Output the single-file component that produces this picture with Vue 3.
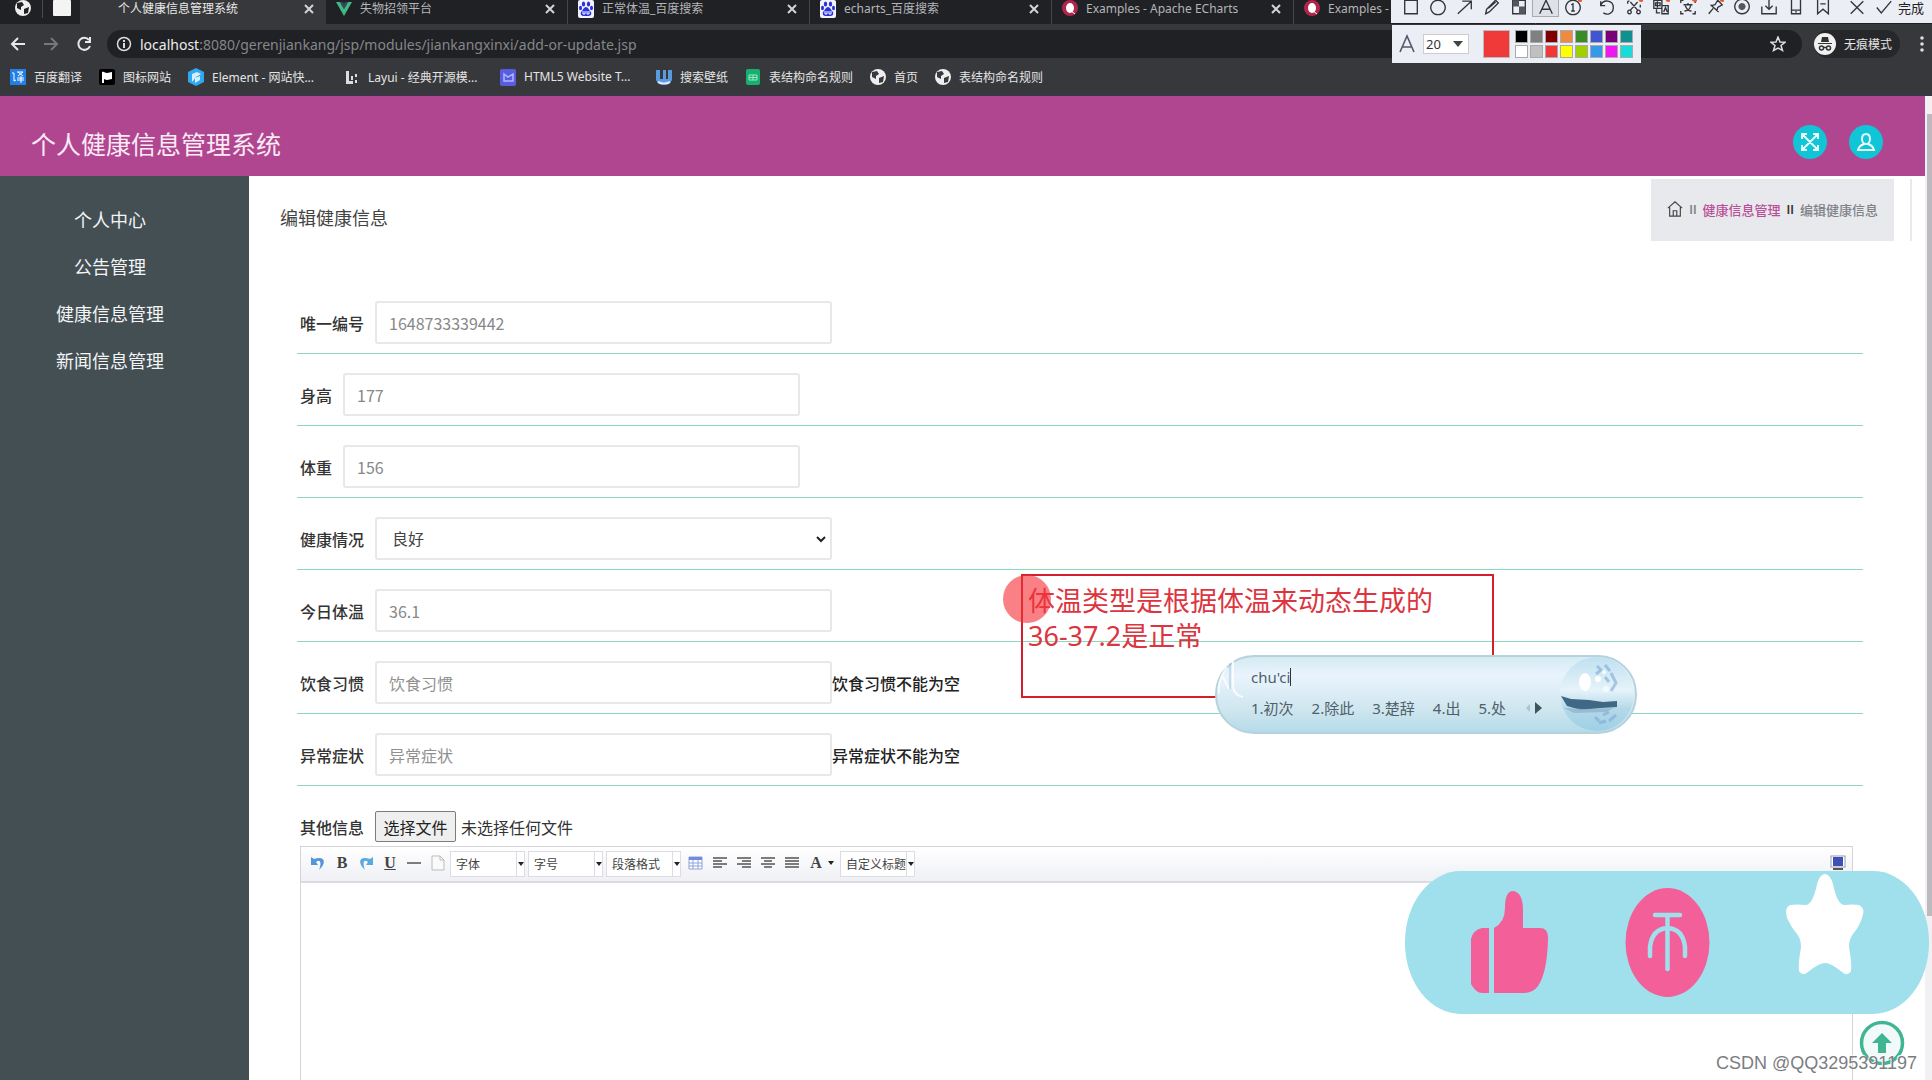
<script setup>
import { ref } from 'vue'

const tabs = [
  { title: '个人健康信息管理系统', icon: 'none', active: true },
  { title: '失物招领平台', icon: 'vue' },
  { title: '正常体温_百度搜索', icon: 'paw' },
  { title: 'echarts_百度搜索', icon: 'paw' },
  { title: 'Examples - Apache ECharts', icon: 'echarts' },
  { title: 'Examples - Apache ECharts', icon: 'echarts' }
]

const bookmarks = [
  { title: '百度翻译', icon: 'fanyi' },
  { title: '图标网站', icon: 'flag' },
  { title: 'Element - 网站快...', icon: 'element', long: true },
  { title: 'Layui - 经典开源模...', icon: 'layui', long: true },
  { title: 'HTML5 Website T...', icon: 'html5', long: true },
  { title: '搜索壁纸', icon: 'wall' },
  { title: '表结构命名规则', icon: 'sheet' },
  { title: '首页', icon: 'globe' },
  { title: '表结构命名规则', icon: 'globe' }
]

const tools = [
  { name: '矩形', d: 'M3 2h14v15H3z' },
  { name: '椭圆', d: 'M10 2a8 8 0 1 0 .01 0z' },
  { name: '箭头', d: 'M2 17L17 3M7 3h10v9' },
  { name: '画笔', d: 'M3 17l1-5L14 2l3 3L7 15zM6 11l8-7' },
  { name: '马赛克', d: 'M3 2h14v15H3z', fill: 'M3 2h7v7H3zM10 9h7v8h-7z' },
  { name: '文字', d: 'M3 17L10 2l7 15M5 12h10', on: true },
  { name: '序号', d: 'M10 2a8 8 0 1 0 .01 0zM8 7l2-1v8M8 14h4', hot: true },
  { name: '撤销', d: 'M3 3v5h5M3 8c3-8 14-6 14 2 0 7-7 9-11 6', gap: true },
  { name: '裁剪', d: 'M3 3h2M3 3v3M6 4l8 9M14 4l-8 9M5 13a2 2 0 1 0 .01 0zM15 13a2 2 0 1 0 .01 0zM17 7v3', hot: true },
  { name: '翻译', d: 'M2 2h9v9H2zM4 5h5v3H4zM6 3v7M11 8h7v9h-7zM13 15l2-5 2 5M5 12v4h4', hot: true },
  { name: '识别', d: 'M2 5V2h3M15 2h3v3M2 14v3h3M15 17h3v-3M5 7h10M10 5v2M7 8c2 5 4 6 7 6M13 8c-1 4-4 6-7 6', hot: true },
  { name: '钉住', d: 'M3 17l5-6M5 7l9 8M6 8l4-1 3-5 5 5-5 3-1 4', hot: true },
  { name: '录制', d: 'M10 1a8 8 0 1 0 .01 0z', fill: 'M10 5a4 4 0 1 0 .01 0z' },
  { name: '下载', d: 'M10 1v11M6 8l4 4 4-4M2 9v8h16V9' },
  { name: '手机', d: 'M5 1h10v16H5zM5 13h10M9 15h2' },
  { name: '收藏', d: 'M4 1h12v16l-6-5-6 5zM7 6h6' },
  { name: '关闭', d: 'M3 3l14 14M17 3L3 17', gap: true },
  { name: '确认', d: 'M2 10l5 6L18 3' }
]

const swatches = [
  '#000000', '#808080', '#800000', '#f08a40', '#3a8a2a', '#3f56d0', '#7a007a', '#109090',
  '#ffffff', '#c0c0c0', '#f03838', '#ffff00', '#a0d000', '#3698e8', '#f018f0', '#18dcd8'
]

const menu = ['个人中心', '公告管理', '健康信息管理', '新闻信息管理']

const fields = ref([
  { id: 'code', label: '唯一编号', value: '1648733339442' },
  { id: 'height', label: '身高', value: '177' },
  { id: 'weight', label: '体重', value: '156' },
  { id: 'state', label: '健康情况', value: '良好', options: ['良好', '一般', '较差'] },
  { id: 'temp', label: '今日体温', value: '36.1' },
  { id: 'diet', label: '饮食习惯', value: '', error: '饮食习惯不能为空' },
  { id: 'symptom', label: '异常症状', value: '', error: '异常症状不能为空' }
])

const candidates = ['1.初次', '2.除此', '3.楚辞', '4.出', '5.处']
const fileInput = ref(null)
</script>

<template>
  <div class="screen">
    <header class="browser">
      <div class="tabs">
        <div class="pinned">
          <svg width="18" height="18" viewBox="0 0 18 18"><circle cx="9" cy="9" r="8" fill="#eee" /><path d="M3 4l5-1 2 3-3 2 0 3-4-2zM10 10l5-2-1 6-4 1z" fill="#202124" /></svg>
          <i></i>
          <svg width="18" height="16" viewBox="0 0 18 16"><rect width="18" height="16" rx="1" fill="#f4f4f4" /></svg>
        </div>
        <div v-for="(t, i) in tabs" :key="i" class="tab" :class="{ active: t.active }">
          <svg width="18" height="18" viewBox="0 0 18 18">
            <template v-if="t.icon === 'vue'"><path d="M1 2h4l4 7 4-7h4L9 16z" fill="#41b883" /><path d="M5 2h3l1 2 1-2h3L9 9z" fill="#35495e" /></template>
            <template v-else-if="t.icon === 'paw'">
              <rect x="1" width="16" height="18" rx="2" fill="#f2f3ff" />
              <g fill="#2b33d8"><ellipse cx="6.500" cy="4" rx="1.700" ry="2.500" /><ellipse cx="11.500" cy="4" rx="1.700" ry="2.500" /><ellipse cx="3.500" cy="8" rx="1.500" ry="2.200" /><ellipse cx="14.500" cy="8" rx="1.500" ry="2.200" /><path d="M9 7c2 0 3 3 5 5 1 3-1 4-3 4H7c-2 0-4-1-3-4 2-2 3-5 5-5z" /></g>
              <path d="M6 11v3h2v-3M10 11v3h2v-3" stroke="#fff" fill="none" />
            </template>
            <template v-else-if="t.icon === 'echarts'"><circle cx="9" cy="8" r="8" fill="#b0254c" /><ellipse cx="9" cy="8" rx="4" ry="5" fill="#fff" /><path d="M10 11l4 3" stroke="#fff" /></template>
          </svg>
          <span class="tab-title">{{ t.title }}</span>
          <button class="tab-close" aria-label="关闭标签页"><svg width="10" height="10" viewBox="0 0 10 10"><path d="M1 1l8 8M9 1L1 9" stroke="currentColor" stroke-width="2" /></svg></button>
        </div>
      </div>

      <div class="address">
        <button class="nav" aria-label="后退"><svg width="18" height="18" viewBox="0 0 18 18"><path d="M16 9H3M9 3L3 9l6 6" /></svg></button>
        <button class="nav off" aria-label="前进"><svg width="18" height="18" viewBox="0 0 18 18"><path d="M2 9h13M9 3l6 6-6 6" /></svg></button>
        <button class="nav" aria-label="刷新"><svg width="18" height="18" viewBox="0 0 18 18"><path d="M14 5a6 6 0 1 0 1 6M15 2v5h-5" /></svg></button>
        <div class="url">
          <svg width="16" height="16" viewBox="0 0 16 16" fill="none" stroke="#ddd"><circle cx="8" cy="8" r="6.500" stroke-width="1.500" /><path d="M8 7v5M8 4v2" stroke-width="2" /></svg>
          <span class="url-text"><b>localhost</b>:8080/gerenjiankang/jsp/modules/jiankangxinxi/add-or-update.jsp</span>
          <svg width="16" height="16" viewBox="0 0 16 16" fill="none" stroke="#ddd" stroke-width="1.500"><path d="M8 1l2 5 5 .3-4 3.200 1.500 5L8 12l-4.500 2.500L5 9.500 1 6.300 6 6z" /></svg>
        </div>
        <div class="incognito">
          <svg width="22" height="22" viewBox="0 0 22 22"><circle cx="11" cy="11" r="11" fill="#f1f1f1" /><path d="M7 9l1-5h6l1 5zM4 10h14v1H4z" fill="#333" /><g fill="none" stroke="#333" stroke-width="1.500"><circle cx="7.500" cy="15" r="2" /><circle cx="14.500" cy="15" r="2" /><path d="M9.500 14.500h3" /></g></svg>
          <span>无痕模式</span>
        </div>
        <button class="dots" aria-label="菜单"><svg width="4" height="18" viewBox="0 0 4 18" fill="#ddd"><circle cx="2" cy="3" r="1.800" /><circle cx="2" cy="9" r="1.800" /><circle cx="2" cy="15" r="1.800" /></svg></button>
      </div>

      <nav class="bookmarks">
        <a v-for="(b, i) in bookmarks" :key="i" href="#" :class="{ long: b.long }">
          <svg width="18" height="18" viewBox="0 0 18 18">
            <template v-if="b.icon === 'fanyi'"><rect x="1" y="1" width="16" height="16" fill="#2080e8" /><path d="M3 5h2v8l2-1M8 4h6l-5 4M9 4l5 4M8 10h7M8 12h7M12 8v7" stroke="#fff" fill="none" /></template>
            <template v-else-if="b.icon === 'flag'"><rect x="1" y="1" width="16" height="16" rx="2" fill="#000" /><path d="M4 4c2-1 3 1 5 1s3-1 5-1v7c-2 0-3 1-5 1s-2-1-3-1v4H4z" fill="#fff" /></template>
            <template v-else-if="b.icon === 'element'"><path d="M9 0l8 4v10l-8 4-8-4V4z" fill="#30a8f0" /><path d="M5 6l5-2 4 2-5 3-4 5zM8 10l5-2v4l-5 3z" fill="#fff" opacity=".8" /></template>
            <template v-else-if="b.icon === 'layui'"><path d="M3 3h3v10h4v3H3zM8 8h2v4H8zM12 6h2v3h-2zM12 12h2v3h-2z" fill="#ddd" /></template>
            <template v-else-if="b.icon === 'html5'"><rect x="1" y="1" width="16" height="17" rx="2" fill="#5a5ce0" /><path d="M5 6l4 3 5-3v7H5z" fill="none" stroke="#aab8ff" stroke-width="1.500" /></template>
            <template v-else-if="b.icon === 'wall'"><path d="M1 2h4v9h3V2h3v9h2V2h4v10q-2 5-8 5t-8-5z" fill="#5a9be0" /><path d="M3 14q6 3 12 0" stroke="#dbe8ff" stroke-width="2" fill="none" /></template>
            <template v-else-if="b.icon === 'sheet'"><rect x="2" y="1" width="14" height="16" rx="2" fill="#18b070" /><path d="M5 7h8v5H5zM9 7v5M5 9.500h8" stroke="#9fe8c4" fill="none" /></template>
            <template v-else><circle cx="9" cy="9" r="8" fill="#eee" /><path d="M3 4l5-1 2 3-3 2 0 3-4-2zM10 10l5-2-1 6-4 1z" fill="#38393c" /></template>
          </svg>
          <span>{{ b.title }}</span>
        </a>
      </nav>
    </header>

    <div class="viewport">
      <div class="page">
        <header class="banner">
          <h1>个人健康信息管理系统</h1>
          <button class="round" aria-label="全屏"><svg width="20" height="20" viewBox="0 0 20 20"><path d="M3 3l14 14M17 3L3 17M2 7V2h5M13 2h5v5M18 13v5h-5M7 18H2v-5" /></svg></button>
          <button class="round" aria-label="用户"><svg width="20" height="20" viewBox="0 0 20 20"><path d="M10 2c-3 0-4 2-4 5s2 5 4 5 4-2 4-5-1-5-4-5zM8 12c-3 1-5 2-6 6h16c-1-4-3-5-6-6" /></svg></button>
        </header>

        <div class="body">
          <aside class="sidebar">
            <a v-for="m in menu" :key="m" href="#">{{ m }}</a>
          </aside>

          <main class="content">
            <div class="heading">
              <h2>编辑健康信息</h2>
              <nav class="crumbs">
                <svg width="16" height="18" viewBox="0 0 18 18" fill="none" stroke="#444" stroke-width="1.300"><path d="M1 8l8-7 8 7M3 7v10h12V7M7 17v-6h4v6" /></svg>
                <span class="bars">II</span><a href="#">健康信息管理</a><span class="bars dark">II</span><span>编辑健康信息</span>
              </nav>
              <i class="edge"></i>
            </div>

            <form class="form" @submit.prevent>
              <div v-for="f in fields" :key="f.id" class="row">
                <label :for="f.id">{{ f.label }}</label>
                <span v-if="f.options" class="select">
                  <select :id="f.id" v-model="f.value"><option v-for="o in f.options" :key="o">{{ o }}</option></select>
                  <svg width="10" height="7" viewBox="0 0 10 7"><path d="M1 1l4 4 4-4" fill="none" stroke="#222" stroke-width="2" /></svg>
                </span>
                <input v-else :id="f.id" v-model="f.value" type="text" :placeholder="f.label">
                <strong v-if="f.error">{{ f.error }}</strong>
              </div>

              <div class="row file">
                <label for="file">其他信息</label>
                <button type="button" @click="fileInput.click()">选择文件</button>
                <span>未选择任何文件</span>
                <input id="file" ref="fileInput" type="file" hidden>
              </div>

              <div class="editor">
                <div class="bar">
                  <button type="button" aria-label="撤销"><svg width="16" height="16" viewBox="0 0 16 16"><path d="M1 2v8h7L6 7c4-3 6 0 3 8 8-7 6-15-5-11z" fill="#5596d8" /></svg></button>
                  <button type="button" class="serif">B</button>
                  <button type="button" aria-label="重做"><svg width="16" height="16" viewBox="0 0 16 16"><path d="M15 2v8H8l2-3C6 4 4 7 7 15-1 8 1 0 12 4z" fill="#5aa8e0" /></svg></button>
                  <button type="button" class="serif under">U</button>
                  <button type="button" aria-label="分隔线"><svg width="16" height="16" viewBox="0 0 16 16"><path d="M1 8h14" stroke="#555" stroke-width="1.500" /></svg></button>
                  <button type="button" aria-label="新建"><svg width="16" height="16" viewBox="0 0 16 16"><path d="M2 1h8l4 4v10H2zM10 1v4h4" fill="#fafafa" stroke="#bbb" /></svg></button>
                  <span v-for="c in ['字体', '字号', '段落格式']" :key="c" class="combo">
                    <select :aria-label="c"><option>{{ c }}</option></select>
                    <svg width="6" height="4" viewBox="0 0 6 4"><path d="M0 0h6L3 4z" fill="#222" /></svg>
                  </span>
                  <button type="button" aria-label="表格"><svg width="16" height="16" viewBox="0 0 16 16"><path d="M1 2h13v12H1zM1 8h13M1 11h13M5 5v9M10 5v9" fill="#fff" stroke="#8fa3d8" /><path d="M1 2h13v3H1z" fill="#6d8be0" /></svg></button>
                  <button type="button" aria-label="左对齐"><svg width="16" height="16" viewBox="0 0 16 16"><path d="M1 3h14M1 6h9M1 9h14M1 12h9" class="ln" /></svg></button>
                  <button type="button" aria-label="右对齐"><svg width="16" height="16" viewBox="0 0 16 16"><path d="M1 3h14M6 6h9M1 9h14M6 12h9" class="ln" /></svg></button>
                  <button type="button" aria-label="居中"><svg width="16" height="16" viewBox="0 0 16 16"><path d="M1 3h14M4 6h8M1 9h14M4 12h8" class="ln" /></svg></button>
                  <button type="button" aria-label="两端对齐"><svg width="16" height="16" viewBox="0 0 16 16"><path d="M1 3h14M1 6h14M1 9h14M1 12h14" class="ln" /></svg></button>
                  <button type="button" class="serif">A</button>
                  <svg class="tri" width="6" height="4" viewBox="0 0 6 4"><path d="M0 0h6L3 4z" fill="#222" /></svg>
                  <span class="combo">
                    <select aria-label="自定义标题"><option>自定义标题</option></select>
                    <svg width="6" height="4" viewBox="0 0 6 4"><path d="M0 0h6L3 4z" fill="#222" /></svg>
                  </span>
                  <button type="button" class="full" aria-label="全屏编辑"><svg width="16" height="16" viewBox="0 0 16 16"><rect x="1" y="1" width="14" height="11" fill="#fff" stroke="#99a" /><rect x="3" y="2" width="10" height="9" fill="#3c50b8" /><path d="M3 14h10" stroke="#555" stroke-width="2" /></svg></button>
                </div>
              </div>
            </form>
          </main>
        </div>
      </div>
      <div class="scroll"><i></i></div>
    </div>

    <div class="capture">
      <button v-for="t in tools" :key="t.name" :aria-label="t.name" :class="{ on: t.on, gap: t.gap }">
        <svg width="18" height="18" viewBox="0 0 20 19">
          <path :d="t.d" fill="none" stroke="#33343c" stroke-width="1.500" />
          <path v-if="t.fill" :d="t.fill" fill="#55565f" />
          <circle v-if="t.hot" cx="18" cy="1" r="3" fill="#ec5a2c" />
        </svg>
      </button>
      <span>完成</span>
    </div>
    <div class="palette">
      <svg width="18" height="20" viewBox="0 0 18 20"><path d="M2 18L9 2l7 16M4 13h10" fill="none" stroke="#55566a" stroke-width="1.600" /></svg>
      <span class="size">
        <select aria-label="字号"><option>20</option></select>
        <svg width="10" height="6" viewBox="0 0 10 6"><path d="M0 0h10L5 6z" fill="#444" /></svg>
      </span>
      <i class="current"></i>
      <div class="grid"><i v-for="c in swatches" :key="c" :style="{ background: c }"></i></div>
    </div>

    <div class="note">体温类型是根据体温来动态生成的<br>36-37.2是正常</div>
    <i class="pointer"></i>

    <div class="ime">
      <svg class="gloss" width="36" height="78" viewBox="0 0 36 78" fill="none"><path d="M18 6v24q0 10 10 12M12 12q-10 14-8 26M8 22l6 12" stroke="#fff" stroke-width="2" opacity=".8" /><path d="M15 8v26" stroke="#8fb6c8" opacity=".7" /></svg>
      <div class="ime-text">
        <p>chu'ci<i></i></p>
        <div class="cands"><span v-for="c in candidates" :key="c">{{ c }}</span><svg width="20" height="12" viewBox="0 0 20 12"><path d="M6 2v8L2 6z" fill="#a8c4d0" /><path d="M11 0v12l7-6z" fill="#3f5360" /></svg></div>
      </div>
      <svg class="ball" width="78" height="78" viewBox="0 0 78 78">
        <defs><linearGradient id="ballFill" x1="0" y1="0" x2="0" y2="1"><stop offset="0" stop-color="#bfe0f0" /><stop offset=".45" stop-color="#e6f3fa" /><stop offset=".7" stop-color="#b4d8e8" /><stop offset="1" stop-color="#9fd0e6" /></linearGradient></defs>
        <ellipse cx="38" cy="39" rx="37" ry="37" fill="url(#ballFill)" />
        <path d="M2 41l10 3 18 1 14 2 14-1v6l-16 1-20 2-14-4z" fill="#3f6885" />
        <path d="M5 53l20 1 30-1-8 4-32 1z" fill="#8fb6ce" opacity=".8" />
        <path d="M38 11l4 4-5 4M46 10l5 6M52 18l5 10-5 8M46 22l4 5M44 60l6-3M50 66l7-6M40 68l7-2M36 62l4 4" fill="none" stroke="#7fa9d4" stroke-width="3" opacity=".6" />
        <ellipse cx="26" cy="27" rx="6" ry="9" fill="#fff" /><circle cx="39" cy="24" r="3" fill="#fff" /><circle cx="47" cy="34" r="3" fill="#f4fbff" /><circle cx="45" cy="17" r="2" fill="#fff" />
      </svg>
    </div>

    <button class="top" aria-label="返回顶部"><svg width="46" height="46" viewBox="0 0 46 46"><circle cx="23" cy="23" r="20.500" fill="#f1faf8" stroke="#3fb593" stroke-width="3.500" /><path d="M23 13l10 10h-6v10h-8V23h-6z" fill="#3fb593" /></svg></button>

    <div class="like">
      <svg width="524" height="143" viewBox="0 0 524 143">
        <g fill="#f35f98">
          <path d="M77 57h7v65h-7q-6 0-11-9V68q2-9 11-11z" />
          <path d="M89 57q11-6 11-20 0-17 8-17 10 1 10 20v17h17q9 0 8 12-1 33-10 46-5 7-14 7H89z" />
          <ellipse cx="262.500" cy="71.500" rx="42" ry="54.500" />
        </g>
        <path d="M250 44h25M262.500 44v54M245 85V76q2-18 17.500-19Q278 58 280 76v9" fill="none" stroke="#a0dfec" stroke-width="4.500" stroke-linecap="round" />
        <path d="M420 3q5 0 8 10 4 20 11 21 9-1 15 0 7 3 3 13-3 9-9 16-4 5-4 13 3 17 2 24-3 6-9 1-11-9-17-9t-17 9q-6 5-9-1-1-7 2-24 0-8-4-13-6-7-10-16-3-10 3-13 7-1 16 0 7-1 11-21 3-10 8-10z" fill="#fff" />
      </svg>
    </div>
    <div class="mark">CSDN @QQ3295391197</div>
  </div>
</template>

<style>
body { margin: 0; }
</style>

<style scoped>
* { box-sizing: border-box; }
.screen { position: relative; display: flex; flex-direction: column; height: 100vh; overflow: hidden; font-family: "Noto Sans", "Noto Sans CJK SC", sans-serif; background: #fff; }
button, input, select { font: inherit; color: inherit; margin: 0; padding: 0; border: 0; background: none; }
button { display: flex; align-items: center; justify-content: center; }
select { appearance: none; }
a { color: inherit; text-decoration: none; }
svg { flex: none; }

.browser { background: #37383b; height: 96px; color: #e4e4e4; font-size: 12px; border-bottom: 2px solid #3b3548; }
.tabs { display: flex; height: 24px; background: #202124; overflow: hidden; }
.pinned { display: flex; align-items: center; gap: 10px; width: 80px; padding: 0 0 8px 14px; }
.pinned i { width: 1px; height: 20px; background: #4a4b4e; }
.tab { display: flex; flex: none; align-items: center; gap: 7px; width: 242px; padding: 0 12px 6px 9px; border-right: 1px solid #44454a; color: #b4b5b8; line-height: 18px; white-space: nowrap; }
.tab.active { width: 246px; padding-left: 13px; background: #37383b; color: #e8e8e8; border: 0; }
.tab-title { flex: 1; overflow: hidden; }
.tab-close { color: #d4d4d4; }
.address { display: flex; align-items: center; height: 40px; padding: 0 8px; }
.nav { width: 33px; padding-right: 14px; }
.nav svg { fill: none; stroke: #e8e8e8; stroke-width: 2; }
.nav.off svg { stroke: #77787b; }
.url { flex: 1; display: flex; align-items: center; gap: 8px; height: 28px; padding: 0 16px 0 9px; border-radius: 14px; background: #202124; }
.url-text { flex: 1; font-size: 14px; color: #85868a; }
.url-text b { font-weight: 400; color: #ececec; }
.incognito { display: flex; align-items: center; gap: 8px; height: 28px; margin: 0 20px 0 12px; padding-right: 8px; border-radius: 14px; background: #26272a; }
.bookmarks { display: flex; align-items: center; gap: 16px; height: 25px; padding-left: 9px; }
.bookmarks a { display: flex; align-items: center; gap: 7px; white-space: nowrap; }
.bookmarks a.long { width: 140px; }
.bookmarks span { overflow: hidden; }

.viewport { flex: 1; display: flex; min-height: 0; }
.page { flex: 1; display: flex; flex-direction: column; min-width: 0; }
.scroll { width: 7px; padding: 18px 0 0 2px; background: #f1f0f3; }
.scroll i { display: block; height: 83%; background: #bcb9c0; }
.banner { display: flex; align-items: center; gap: 22px; height: 80px; padding: 12px 42px 0 31px; background: #b0468f; }
.banner h1 { flex: 1; margin: 0; padding-top: 4px; font-size: 25px; line-height: 36px; font-weight: 400; color: #fbeaf6; }
.round { width: 34px; height: 34px; border-radius: 50%; background: #10c6d6; }
.round svg { fill: none; stroke: #e8fbff; stroke-width: 2; }
.body { flex: 1; display: flex; min-height: 0; }
.sidebar { width: 249px; padding: 21px 29px 0 0; background: #444f54; }
.sidebar a { display: block; height: 47px; line-height: 47px; text-align: center; font-size: 18px; color: #f2f4f5; }
.content { flex: 1; display: flex; flex-direction: column; min-width: 0; padding-top: 3px; }
.heading { display: flex; align-items: flex-start; height: 103px; padding: 0 13px 0 31px; }
.heading h2 { flex: 1; margin: 25px 0 0; font-size: 18px; line-height: 28px; font-weight: 400; color: #444; }
.crumbs { display: flex; align-items: center; gap: 6px; height: 62px; padding: 0 16px 2px; background: #e8e9ec; font-size: 13px; font-weight: 500; color: #80828a; }
.crumbs a { color: #b85099; }
.crumbs .bars { font-family: Roboto, sans-serif; }
.crumbs .dark { color: #333; }
.edge { width: 2px; height: 62px; margin-left: 16px; background: #e8e9ec; }

.form { flex: 1; display: flex; flex-direction: column; padding: 0 62px 0 48px; font-size: 16px; }
.row { display: flex; align-items: center; height: 72px; padding: 19px 0 9px 3px; border-bottom: 1px solid #8ad8be; color: #333; }
.row label { margin-right: 11px; font-weight: 500; font-family: "Noto Sans CJK SC", sans-serif; }
.row > input, .select { width: 457px; height: 43px; border: 2px solid #e8e7ea; border-radius: 3px; }
.row > input { padding: 0 12px; color: #888; font-family: "Noto Sans CJK SC", sans-serif; }
.row > input::placeholder { color: #909090; opacity: 1; }
.row strong { font-weight: 500; color: #222; font-family: "Noto Sans CJK SC", sans-serif; }
.select { position: relative; }
.select select { width: 100%; height: 100%; padding-left: 15px; color: #444; }
.select svg { position: absolute; right: 4px; top: 17px; pointer-events: none; }
.row.file { height: 60px; padding: 21px 0 0 3px; border: 0; }
.file button { width: 81px; height: 31px; margin-right: 5px; border: 1px solid #7c7c7c; border-radius: 2px; background: #efefef; color: #222; }
.editor { flex: 1; margin: 0 10px 0 3px; border: 1px solid #d4d4da; border-bottom: 0; }
.bar { display: flex; align-items: center; height: 36px; padding: 0 2px 0 5px; background: linear-gradient(#fff, #eff0f5); border-bottom: 2px solid #dcdbe2; }
.bar button { width: 24px; padding-bottom: 3px; }
.bar .serif { font: bold 16px/20px "Liberation Serif", serif; color: #444; }
.bar .under { text-decoration: underline; }
.bar .ln { stroke: #7c7c7c; stroke-width: 2; }
.bar .tri { margin: 0 6px 3px 0; }
.bar .full { margin-left: auto; }
.combo { position: relative; width: 75px; height: 26px; margin-right: 3px; border: 1px solid #dddce4; background: #fff; font-size: 12px; color: #444; }
.combo select { display: block; width: 66px; height: 100%; padding-left: 5px; border-right: 1px solid #dddce4; }
.combo svg { position: absolute; right: 0; top: 10px; }

.capture { position: absolute; top: 0; right: 0; display: flex; align-items: center; width: 541px; height: 23px; padding: 0 0 9px 6px; background: #eceef5; font-size: 13px; color: #222; }
.capture button { width: 27px; height: 20px; }
.capture .gap { margin-left: 7px; }
.capture .on { border: 1px solid #aaa; background: #dfe1e8; }
.capture span { padding-left: 1px; white-space: nowrap; }
.palette { position: absolute; top: 25px; right: 291px; display: flex; align-items: center; height: 38px; padding: 0 8px 0 6px; background: #eceef5; }
.size { position: relative; width: 46px; height: 20px; margin: 0 14px 0 7px; border: 1px solid #ccc; background: #fff; font-size: 13px; color: #333; }
.size select { display: block; width: 100%; height: 18px; padding-left: 2px; line-height: 18px; }
.size svg { position: absolute; right: 5px; top: 6px; }
.current { width: 27px; height: 28px; margin-right: 5px; border: 1px solid #bbb; background: #f03a3a; }
.grid { display: grid; grid-template-columns: repeat(8, 13px); gap: 2px; }
.grid i { height: 13px; border: 1px solid #aaa; }

.note { position: absolute; left: 1021px; top: 574px; width: 473px; height: 124px; padding: 7px 5px; border: 2px solid #d3202c; font-size: 27px; line-height: 35px; color: #dc3540; white-space: nowrap; }
.pointer { position: absolute; left: 1003px; top: 575px; width: 48px; height: 48px; border-radius: 50%; background: rgba(245, 50, 56, .62); }
.ime { position: absolute; left: 1215px; top: 655px; display: flex; width: 422px; height: 79px; border: 2px solid #b4d3dd; border-radius: 39px; background: linear-gradient(#d5ebf3, #e9f4fd 25%, #cfe6ef 70%, #b5dbe8); font-size: 15px; color: #50606a; }
.gloss { margin: -2px 0 0 -2px; }
.ime-text { flex: 1; padding-top: 8px; white-space: nowrap; }
.ime p { display: flex; align-items: center; margin: 0 0 8px; line-height: 24px; }
.ime p i { width: 1px; height: 18px; background: #333; }
.cands { display: flex; align-items: center; gap: 18px; line-height: 22px; }
.ball { margin: -2px -2px 0 0; }
.top { position: absolute; right: 27px; bottom: 14px; }
.like { position: absolute; right: 3px; bottom: 66px; height: 143px; border-radius: 56px / 71px; background: #a0dfec; }
.mark { position: absolute; right: 15px; bottom: 5px; font: 18px/24px "Liberation Sans", sans-serif; color: #7c7d82; text-shadow: -1px -1px 0 #fff; }
</style>
